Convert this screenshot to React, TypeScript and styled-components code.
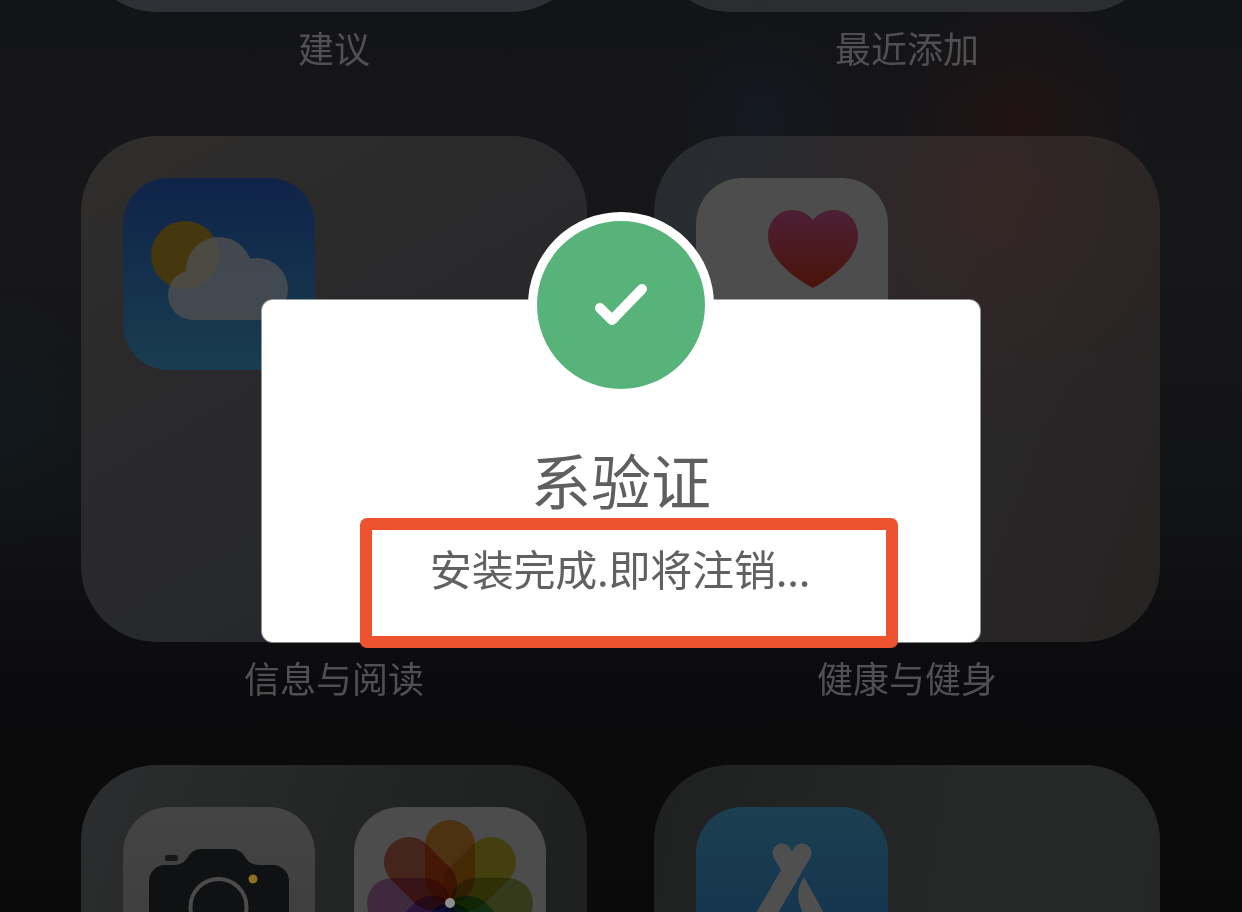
import React from "react";
import styled, { createGlobalStyle } from "styled-components";

const Global = createGlobalStyle`
  html, body { margin: 0; padding: 0; background: #0b0b0c; }
`;

const Screen = styled.main`
  position: relative;
  width: 1242px;
  height: 912px;
  overflow: hidden;
  font-family: "Noto Sans CJK SC", "Noto Sans", sans-serif;
  background:
    radial-gradient(circle at 1020px 120px, rgba(50, 16, 12, 0.4), rgba(50, 16, 12, 0) 130px),
    radial-gradient(circle at 760px 110px, rgba(20, 32, 56, 0.28), rgba(20, 32, 56, 0) 90px),
    radial-gradient(circle at 0px 420px, rgba(16, 36, 44, 0.3), rgba(16, 36, 44, 0) 130px),
    linear-gradient(180deg, #131417 0%, #17171a 25%, #121315 55%, #0b0b0d 75%, #0a0a0b 100%);
`;

const FolderGrid = styled.div`
  display: grid;
  grid-template-columns: 506px 506px;
  column-gap: 67px;
  padding-left: 81px;
  margin-top: -494px;
`;

const Cell = styled.section`
  display: flex;
  flex-direction: column;
  align-items: center;
  height: 629.5px;
`;

const Folder = styled.div<{ $bg: string }>`
  box-sizing: border-box;
  flex: none;
  width: 506px;
  height: 506px;
  padding: 42px;
  display: flex;
  gap: 39px;
  align-items: flex-start;
  border-radius: 76px;
  background: ${(p) => p.$bg};
`;

const Label = styled.h2`
  margin: 9px 0 0;
  font-size: 36px;
  line-height: 52px;
  font-weight: 400;
  color: #505052;
  white-space: nowrap;
`;

const AppIcon = styled.div<{ $bg: string }>`
  flex: none;
  width: 192px;
  height: 192px;
  border-radius: 46px;
  overflow: hidden;
  background: ${(p) => p.$bg};
  & > svg { display: block; }
`;

const Modal = styled.div`
  position: absolute;
  left: 262px;
  top: 300px;
  box-sizing: border-box;
  width: 718px;
  height: 342px;
  display: flex;
  flex-direction: column;
  align-items: center;
  padding-top: 140px;
  background: #fff;
  border-radius: 11px;
  box-shadow: 0 0 0 1px rgba(255, 255, 255, 0.5);
`;

const Badge = styled.div`
  position: absolute;
  top: -88px;
  left: 266px;
  box-sizing: border-box;
  width: 186px;
  height: 186px;
  border: 9px solid #fff;
  border-radius: 50%;
  background: #58b37a;
  display: flex;
  align-items: center;
  justify-content: center;
`;

const Title = styled.h1`
  margin: 0;
  font-size: 60px;
  line-height: 78px;
  font-weight: 400;
  color: #5f5f5f;
  white-space: nowrap;
`;

const Highlight = styled.div`
  box-sizing: border-box;
  width: 538px;
  height: 130px;
  flex: none;
  margin-left: 15px;
  display: flex;
  justify-content: center;
  padding: 10px 17px 0 0;
  border: 12px solid #ee5330;
  border-radius: 7px;
  background: #fff;
`;

const Message = styled.p`
  margin: 0;
  font-size: 42px;
  line-height: 56px;
  letter-spacing: -0.2px;
  color: #616161;
  white-space: nowrap;
`;

const PetalGroup = styled.g`
  filter: brightness(0.3);
`;

const Petal = styled.rect`
  mix-blend-mode: multiply;
`;

const WeatherGlyph = () => (
  <svg width="192" height="192" viewBox="0 0 192 192">
    <circle cx="62" cy="77" r="34" fill="#46380e" />
    <g opacity="0.78" fill="#4f5051">
      <circle cx="96" cy="92" r="33" />
      <circle cx="70" cy="117" r="25" />
      <circle cx="134" cy="111" r="31" />
      <rect x="70" y="92" width="64" height="50" />
    </g>
  </svg>
);

const HeartGlyph = () => (
  <svg width="192" height="192" viewBox="0 0 192 192">
    <defs>
      <linearGradient id="heart" x1="0" y1="0" x2="0" y2="1">
        <stop offset="0" stopColor="#4c2036" />
        <stop offset="1" stopColor="#4a1208" />
      </linearGradient>
    </defs>
    <path
      d="M117 110 C106 104 72 84 72 58 C72 42 84 32 96 32 C105 32 112 36 117 42 C122 36 129 32 138 32 C151 32 162 42 162 58 C162 84 128 104 117 110 Z"
      fill="url(#heart)"
    />
  </svg>
);

const CameraGlyph = () => (
  <svg width="192" height="192" viewBox="0 0 192 192">
    <path
      d="M26 74 a16 16 0 0 1 16 -16 h8 c8 0 12 -3 15 -8 c3 -5 7 -8 13 -8 h30 c7 0 11 3 14 8 c3 5 7 8 15 8 h13 a16 16 0 0 1 16 16 v118 h-140 z"
      fill="#101113"
    />
    <rect x="42" y="48" width="13" height="6" rx="2.5" fill="#17181a" />
    <circle cx="130" cy="72" r="4.5" fill="#8c7120" />
    <circle cx="95.5" cy="100" r="28" fill="none" stroke="#4b4b4c" strokeWidth="4" />
  </svg>
);

const petals = [
  { a: 315, c: "rgb(228,120,91)" },
  { a: 270, c: "rgb(211,137,200)" },
  { a: 225, c: "rgb(170,128,255)" },
  { a: 180, c: "rgb(85,143,255)" },
  { a: 135, c: "rgb(85,200,170)" },
  { a: 90, c: "rgb(177,194,94)" },
  { a: 45, c: "rgb(228,211,51)" },
  { a: 0, c: "rgb(255,165,57)" },
];

const PhotosGlyph = () => (
  <svg width="192" height="192" viewBox="0 0 192 192">
    <PetalGroup>
      {petals.map((p) => (
        <Petal
          key={p.a}
          x="71"
          y="13"
          width="50"
          height="83"
          rx="25"
          fill={p.c}
          transform={`rotate(${p.a} 96 96)`}
        />
      ))}
    </PetalGroup>
    <circle cx="96" cy="96" r="5" fill="#8d8d8d" />
  </svg>
);

const StoreGlyph = () => (
  <svg width="192" height="192" viewBox="0 0 192 192">
    <g stroke="#4f4f50" strokeWidth="19" strokeLinecap="round" fill="none">
      <path d="M106 46 L50 142" />
      <path d="M86 46 L96 63" />
    </g>
    <path d="M108 70 C100 82 100 94 109 110 L130 146 L150 146 Z" fill="#4f4f50" />
  </svg>
);

const Check = () => (
  <svg width="56" height="46" viewBox="0 0 56 46">
    <path d="M7 26 L19 38 L49 7" fill="none" stroke="#fff" strokeWidth="10" strokeLinecap="round" strokeLinejoin="round" />
  </svg>
);

export default function App() {
  return (
    <Screen>
      <Global />
      <FolderGrid>
        <Cell>
          <Folder $bg="linear-gradient(180deg, #2c2c2e, #2f3035)" />
          <Label>建议</Label>
        </Cell>
        <Cell>
          <Folder $bg="linear-gradient(100deg, #2a2d31, #2c2d30)" />
          <Label>最近添加</Label>
        </Cell>
        <Cell>
          <Folder $bg="linear-gradient(150deg, #2f2e2c 0%, #2a292b 40%, #28292c 65%, #222528 100%)">
            <AppIcon $bg="linear-gradient(180deg, #0f2349, #193d50)">
              <WeatherGlyph />
            </AppIcon>
          </Folder>
          <Label>信息与阅读</Label>
        </Cell>
        <Cell>
          <Folder $bg="radial-gradient(circle at 340px 60px, rgba(70, 36, 30, 0.4), rgba(70, 36, 30, 0) 240px), linear-gradient(110deg, #282c31 0%, #29282b 50%, #262322 100%)">
            <AppIcon $bg="#4d4d4d">
              <HeartGlyph />
            </AppIcon>
          </Folder>
          <Label>健康与健身</Label>
        </Cell>
        <Cell>
          <Folder $bg="linear-gradient(110deg, #2c2d2e 0%, #222323 50%, #1c1d1d 100%)">
            <AppIcon $bg="linear-gradient(180deg, #444444, #3b3b3b)">
              <CameraGlyph />
            </AppIcon>
            <AppIcon $bg="#4c4c4c">
              <PhotosGlyph />
            </AppIcon>
          </Folder>
        </Cell>
        <Cell>
          <Folder $bg="linear-gradient(100deg, #1f2020 0%, #272828 60%, #252626 100%)">
            <AppIcon $bg="linear-gradient(180deg, #1b3f50, #122d4e)">
              <StoreGlyph />
            </AppIcon>
          </Folder>
        </Cell>
      </FolderGrid>
      <Modal>
        <Badge>
          <Check />
        </Badge>
        <Title>系验证</Title>
        <Highlight>
          <Message>安装完成.即将注销...</Message>
        </Highlight>
      </Modal>
    </Screen>
  );
}
